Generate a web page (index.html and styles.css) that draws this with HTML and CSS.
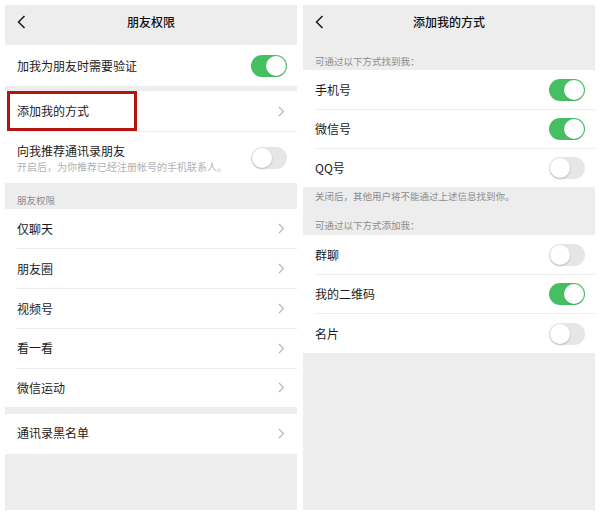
FILE: index.html
```html
<!DOCTYPE html>
<html lang="zh">
<head>
<meta charset="utf-8">
<link rel="stylesheet" href="styles.css">
</head>
<body>
<div class="screens">
  <section class="panel">
    <header class="nav">
      <svg class="back" width="9" height="14" viewBox="0 0 9 14"><polyline points="7.5,1 1.5,7 7.5,13" fill="none" stroke="#1a1a1a" stroke-width="1.5"/></svg>
      <span class="title">朋友权限</span>
    </header>
    <div class="group">
      <div class="row r41"><div class="inner"><span class="label">加我为朋友时需要验证</span><span class="switch on"></span></div></div>
    </div>
    <div class="group gap5">
      <div class="row r40 marked"><div class="inner"><span class="label">添加我的方式</span><svg class="chev" width="7" height="11" viewBox="0 0 7 11"><polyline points="1,1 5.5,5.5 1,10" fill="none" stroke="#b4b4b4" stroke-width="1.1"/></svg></div><span class="mark"></span></div>
      <div class="row r52"><div class="inner"><div class="two"><span class="label">向我推荐通讯录朋友</span><span class="sub">开启后，为你推荐已经注册帐号的手机联系人。</span></div><span class="switch"></span></div></div>
    </div>
    <div class="caption cap-left">朋友权限</div>
    <div class="group">
      <div class="row r39"><div class="inner"><span class="label">仅聊天</span><svg class="chev" width="7" height="11" viewBox="0 0 7 11"><polyline points="1,1 5.5,5.5 1,10" fill="none" stroke="#b4b4b4" stroke-width="1.1"/></svg></div></div>
      <div class="row r40"><div class="inner"><span class="label">朋友圈</span><svg class="chev" width="7" height="11" viewBox="0 0 7 11"><polyline points="1,1 5.5,5.5 1,10" fill="none" stroke="#b4b4b4" stroke-width="1.1"/></svg></div></div>
      <div class="row r39"><div class="inner"><span class="label">视频号</span><svg class="chev" width="7" height="11" viewBox="0 0 7 11"><polyline points="1,1 5.5,5.5 1,10" fill="none" stroke="#b4b4b4" stroke-width="1.1"/></svg></div></div>
      <div class="row r40"><div class="inner"><span class="label">看一看</span><svg class="chev" width="7" height="11" viewBox="0 0 7 11"><polyline points="1,1 5.5,5.5 1,10" fill="none" stroke="#b4b4b4" stroke-width="1.1"/></svg></div></div>
      <div class="row r39"><div class="inner"><span class="label">微信运动</span><svg class="chev" width="7" height="11" viewBox="0 0 7 11"><polyline points="1,1 5.5,5.5 1,10" fill="none" stroke="#b4b4b4" stroke-width="1.1"/></svg></div></div>
    </div>
    <div class="group gap7">
      <div class="row r39"><div class="inner"><span class="label up1">通讯录黑名单</span><svg class="chev" width="7" height="11" viewBox="0 0 7 11"><polyline points="1,1 5.5,5.5 1,10" fill="none" stroke="#b4b4b4" stroke-width="1.1"/></svg></div></div>
    </div>
  </section>

  <section class="panel">
    <header class="nav">
      <svg class="back" width="9" height="14" viewBox="0 0 9 14"><polyline points="7.5,1 1.5,7 7.5,13" fill="none" stroke="#1a1a1a" stroke-width="1.5"/></svg>
      <span class="title">添加我的方式</span>
    </header>
    <div class="caption cap-right1">可通过以下方式找到我：</div>
    <div class="group">
      <div class="row h39"><div class="inner"><span class="label">手机号</span><span class="switch on"></span></div></div>
      <div class="row h39"><div class="inner"><span class="label">微信号</span><span class="switch on"></span></div></div>
      <div class="row h39"><div class="inner"><span class="label">QQ号</span><span class="switch"></span></div></div>
    </div>
    <div class="notes">
      <div class="note">关闭后，其他用户将不能通过上述信息找到你。</div>
      <div class="note note2">可通过以下方式添加我：</div>
    </div>
    <div class="group">
      <div class="row h39"><div class="inner"><span class="label">群聊</span><span class="switch"></span></div></div>
      <div class="row h39"><div class="inner"><span class="label">我的二维码</span><span class="switch on"></span></div></div>
      <div class="row r40"><div class="inner"><span class="label">名片</span><span class="switch"></span></div></div>
    </div>
  </section>
</div>
</body>
</html>
```

FILE: styles.css
```css
* { box-sizing: border-box; }
html, body { margin: 0; padding: 0; background: #ffffff; }
body {
  width: 600px;
  height: 515px;
  font-family: "Noto Sans CJK SC", "Noto Sans", sans-serif;
  color: #1b1b1b;
}
.screens {
  display: flex;
  gap: 6px;
  padding: 5px;
}
.panel {
  width: 292px;
  height: 505px;
  background: #ededed;
  display: flex;
  flex-direction: column;
}
.nav {
  height: 40px;
  position: relative;
  display: flex;
  justify-content: center;
  padding-top: 8px;
}
.back {
  position: absolute;
  left: 12px;
  top: 10px;
}
.title {
  font-size: 12px;
  line-height: 17px;
  font-weight: 500;
  color: #111;
}
.group { background: #fff; }
.gap5 { margin-top: 5px; }
.gap7 { margin-top: 7px; }
.row {
  position: relative;
  padding-left: 12px;
  display: flex;
}
.r39 { height: 39.4px; }
.h39 { height: 39px; }
.r40 { height: 40px; }
.r41 { height: 41px; }
.r52 { height: 52px; }
.inner {
  flex: 1;
  display: flex;
  align-items: center;
  justify-content: space-between;
  padding-right: 10px;
}
.row + .row .inner { border-top: 1px solid #ececec; }
.label {
  font-size: 12px;
  line-height: 16px;
}
.up1 { margin-top: -2px; }
.two {
  display: flex;
  flex-direction: column;
  padding-top: 1px;
}
.sub {
  font-size: 10px;
  line-height: 14px;
  color: #b2b2b2;
  margin-top: 1px;
}
.chev { margin-right: 2px; }
.switch {
  width: 36px;
  height: 22px;
  border-radius: 11px;
  background: #e6e6e7;
  position: relative;
  flex: none;
}
.switch::after {
  content: "";
  position: absolute;
  top: 1px;
  left: 1px;
  width: 20px;
  height: 20px;
  border-radius: 50%;
  background: #fff;
  box-shadow: 0 1px 2px rgba(0,0,0,0.22);
}
.switch.on { background: #45bf62; }
.switch.on::after { left: 15px; box-shadow: 0 1px 1px rgba(0,0,0,0.12); }
.mark {
  position: absolute;
  left: 2px;
  top: 0;
  width: 130px;
  height: 40px;
  border: 3px solid #b5140f;
}
.caption {
  font-size: 9.5px;
  line-height: 13px;
  color: #8c8c8c;
  padding-left: 12px;
}
.cap-left { height: 26px; padding-top: 11px; }
.cap-right1 { height: 25px; padding-top: 10px; }
.notes {
  height: 48px;
  padding: 3px 0 0 12px;
}
.note {
  font-size: 9.5px;
  line-height: 13px;
  color: #8c8c8c;
}
.note2 { margin-top: 16px; }
```
